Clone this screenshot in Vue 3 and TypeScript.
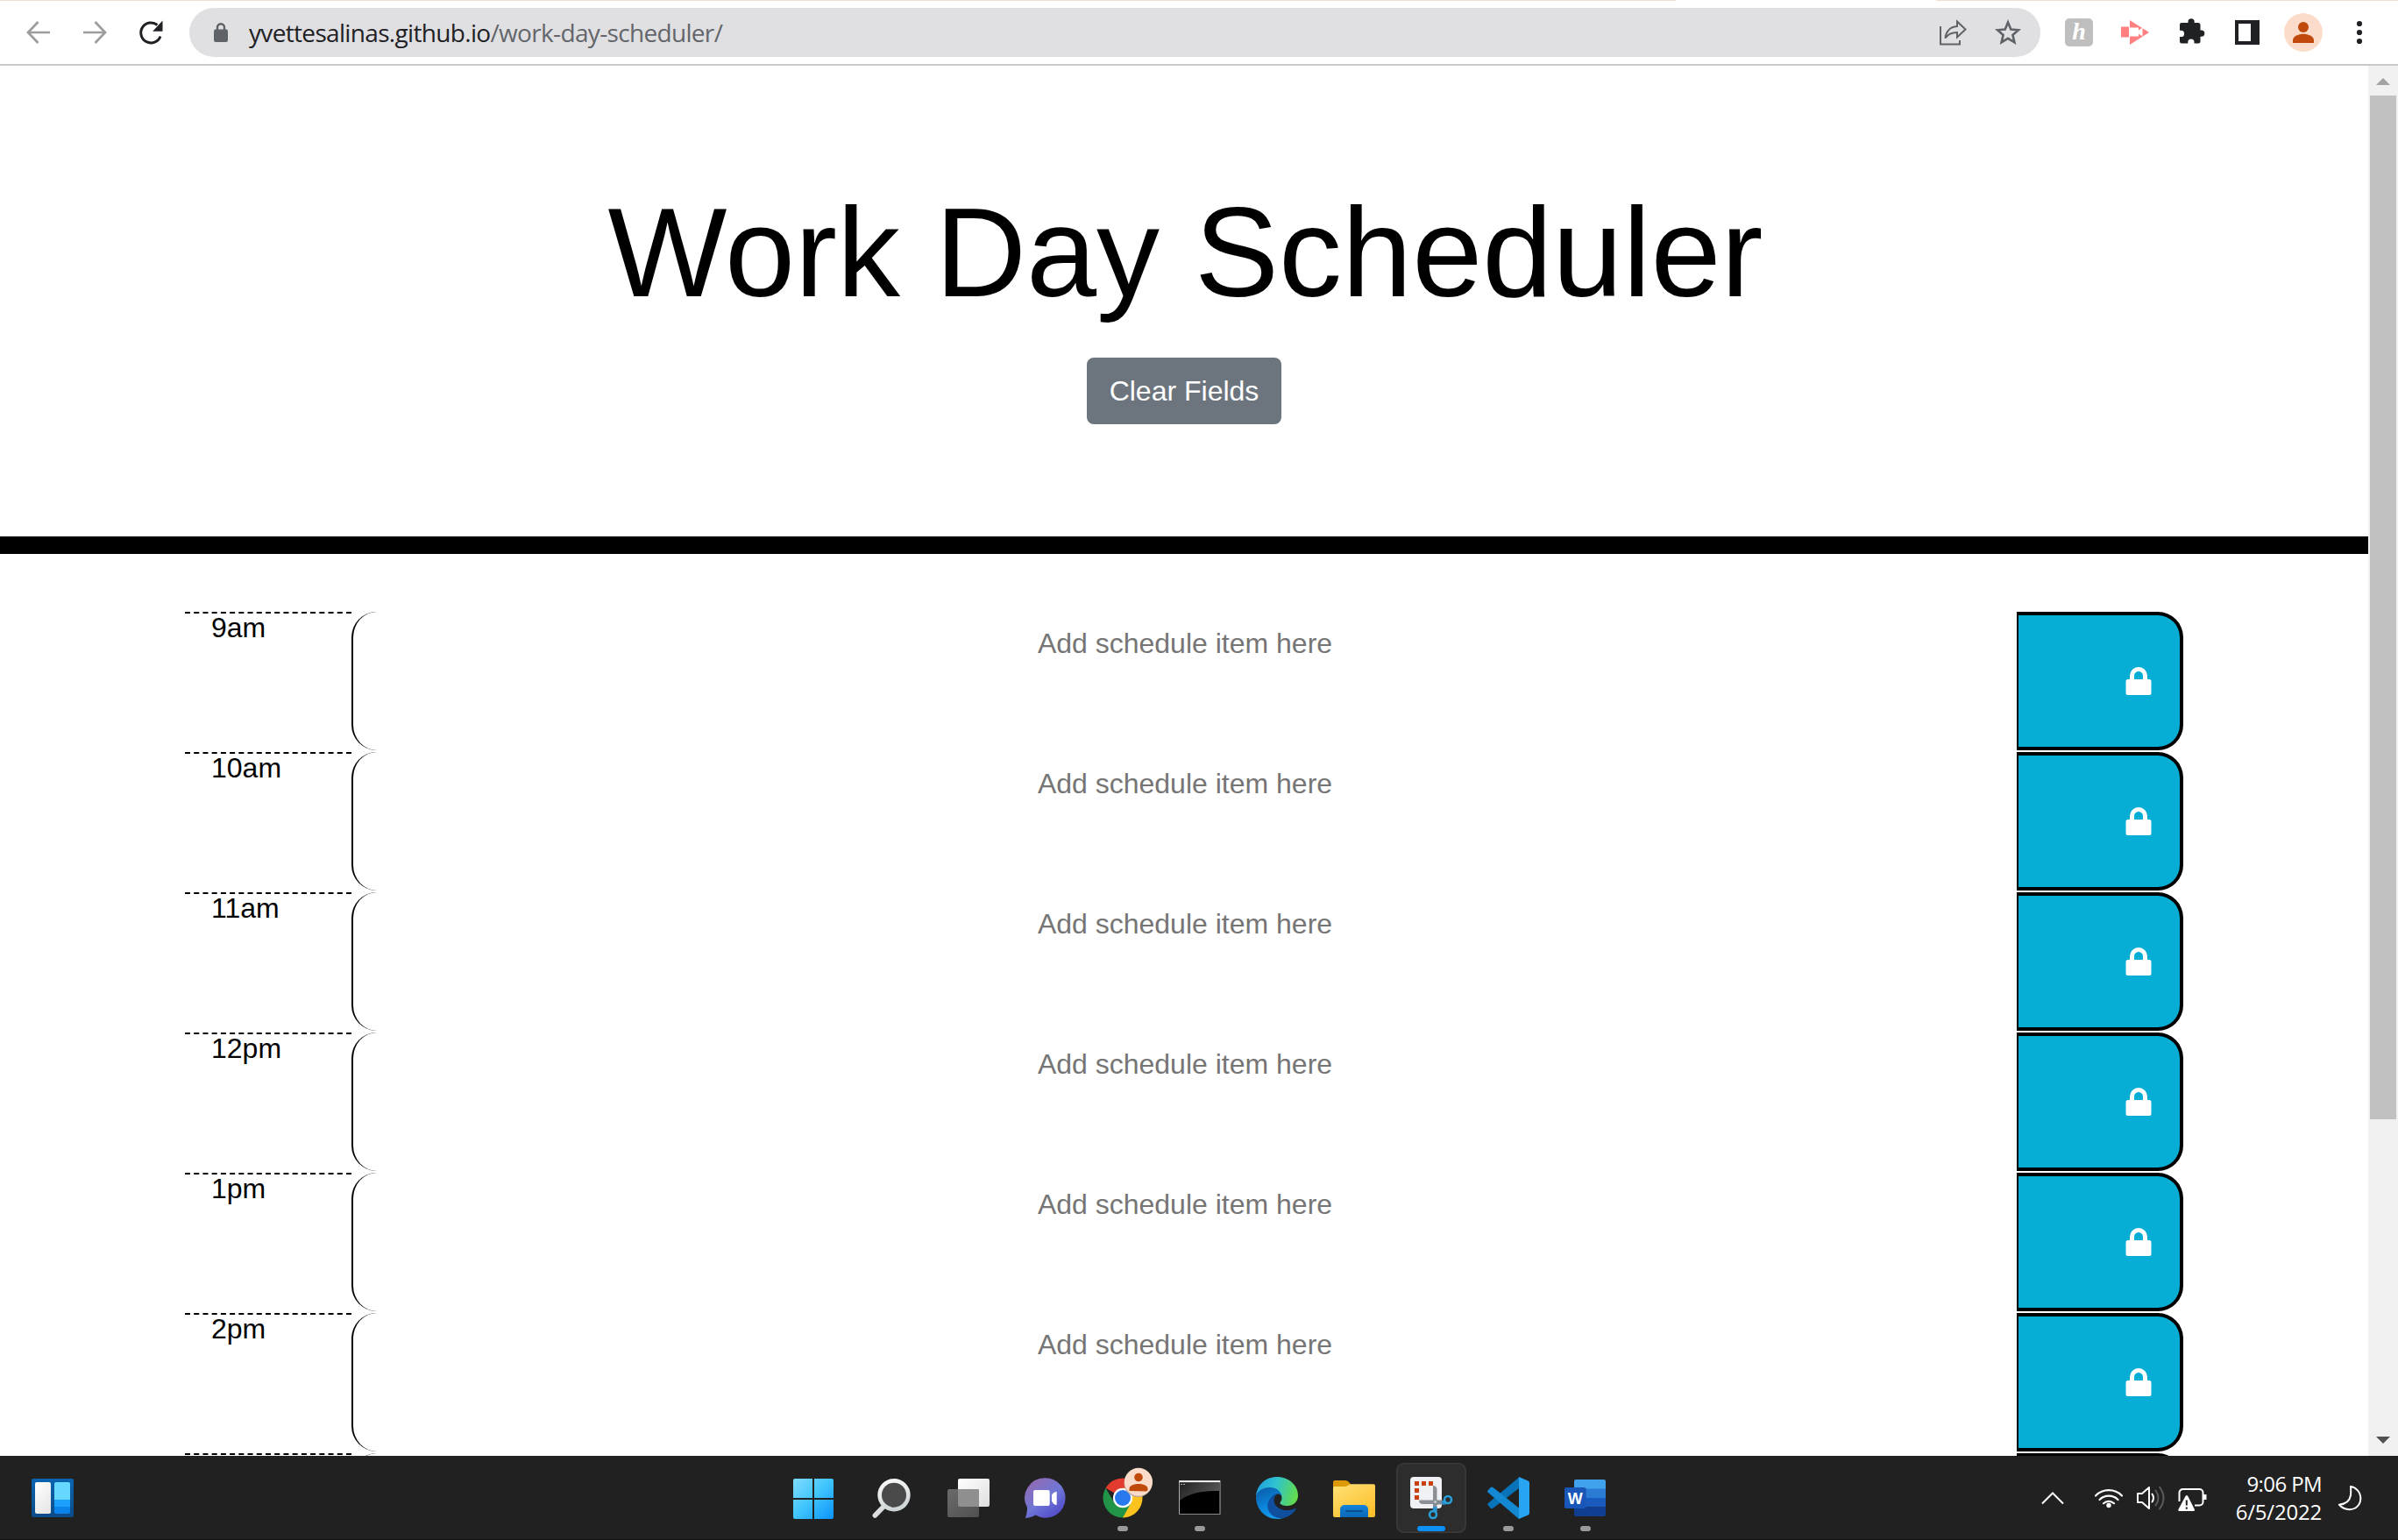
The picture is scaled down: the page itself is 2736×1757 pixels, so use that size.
<script setup lang="ts">
interface TimeBlock {
  label: string
}

const blocks: TimeBlock[] = [
  { label: '9am' },
  { label: '10am' },
  { label: '11am' },
  { label: '12pm' },
  { label: '1pm' },
  { label: '2pm' },
  { label: '' },
]
</script>

<template>
  <div class="screen">
    <header class="toolbar">
      <svg class="ic back" width="30" height="30" viewBox="0 0 30 30" fill="none" stroke="#9d9d9f" stroke-width="2.7"><path d="M28 15H4M14.5 3L3 15l11.500 12" /></svg>
      <svg class="ic forward" width="30" height="30" viewBox="0 0 30 30" fill="none" stroke="#9d9d9f" stroke-width="2.7"><path d="M2 15h24M15.500 3L27 15 15.500 27" /></svg>
      <svg class="ic reload" width="30" height="30" viewBox="0 0 30 30"><path d="M26 19.500A11.500 11.500 0 1 1 22.500 6.500" fill="none" stroke="#202124" stroke-width="3" /><path d="M28.500 1.500v12.200H17.200z" fill="#202124" /></svg>
      <div class="address">
        <svg width="18" height="24" viewBox="0 0 18 24"><path d="M5 9V6.200a4 4 0 0 1 8 0V9" fill="none" stroke="#5f6368" stroke-width="2.400" /><rect x="1" y="8.500" width="16" height="14.500" rx="2" fill="#5f6368" /></svg>
        <span class="url"><span class="host">yvettesalinas.github.io</span>/work-day-scheduler/</span>
        <svg class="share" width="32" height="30" viewBox="0 0 32 30" fill="none" stroke="#5f6368" stroke-width="2"><path d="M2 8v20.500h22V24" /><path d="M21 2.500L30.500 11.500 21 20.500v-5.500C14 15 10 17.500 7.500 21.500 8 14.500 12.500 8.500 21 8z" /></svg>
        <svg class="star" width="30" height="30" viewBox="0 0 30 30"><path d="M15 3.500l3.300 8 8.700.7-6.600 5.700 2 8.400L15 21.800l-7.400 4.500 2-8.400L3 12.200l8.700-.7z" fill="none" stroke="#5f6368" stroke-width="2.600" /></svg>
      </div>
      <div class="honey">h</div>
      <svg class="ic clip" width="32" height="28" viewBox="0 0 32 28"><path d="M0 7.500h9v12H0zM10 0l22 14L10 28z" fill="#ff8080" /><path d="M9.500 8.500h10.500v3l4.500-3v10l-4.500-3v3H9.500z" fill="#fff" /></svg>
      <svg class="ic puzzle" width="30" height="30" viewBox="0 0 30 30"><path d="M3 6h7.500V4.800a3.600 3.600 0 0 1 7.200 0V6H22a2.500 2.500 0 0 1 2.500 2.500v6h1.200a3.600 3.600 0 0 1 0 7.200h-1.200V27a2.500 2.500 0 0 1-2.500 2.500h-4.500V28a3.600 3.600 0 0 0-7.200 0v1.500H3.500A2.500 2.500 0 0 1 1 27v-5h1.500a3.600 3.600 0 0 0 0-7.200H1V8a2 2 0 0 1 2-2z" fill="#202124" /></svg>
      <svg class="ic panel" width="28" height="28" viewBox="0 0 28 28"><path d="M0 0h28v28H0z" fill="#202124" /><path d="M4 4h14v20H4z" fill="#fff" /></svg>
      <svg class="ic avatar" width="44" height="44" viewBox="0 0 44 44"><circle cx="22" cy="22" r="22" fill="#fbdccb" /><circle cx="22" cy="16" r="6" fill="#c04a0b" /><path d="M10 34v-3c0-5 7-7.200 12-7.200S34 26 34 31v3z" fill="#c04a0b" /></svg>
      <svg class="ic dots" width="8" height="28" viewBox="0 0 8 28" fill="#202124"><circle cx="4" cy="4" r="3.100" /><circle cx="4" cy="14" r="3.100" /><circle cx="4" cy="24" r="3.100" /></svg>
    </header>

    <div class="viewport">
      <main class="page">
        <section class="jumbotron">
          <h1>Work Day Scheduler</h1>
          <button class="clear">Clear Fields</button>
        </section>
        <section class="schedule">
          <div v-for="(block, i) in blocks" :key="i" class="row">
            <div class="hour">{{ block.label }}</div>
            <textarea class="entry" placeholder="Add schedule item here"></textarea>
            <button class="save">
              <svg width="30" height="32" viewBox="0 0 30 32"><path d="M7.500 15.500V10a7.500 7.500 0 0 1 15 0v5.500" fill="none" stroke="#fff" stroke-width="5" /><rect x=".5" y="14" width="29" height="18" rx="2.500" fill="#fff" /></svg>
            </button>
          </div>
        </section>
      </main>
      <div class="scrollbar">
        <svg width="16" height="8" viewBox="0 0 16 8"><path d="M8 0l8 8H0z" fill="#a3a3a3" /></svg>
        <div class="thumb"></div>
        <svg class="down" width="16" height="8" viewBox="0 0 16 8"><path d="M0 0h16L8 8z" fill="#505050" /></svg>
      </div>
    </div>

    <footer class="taskbar">
      <div class="widgets">
        <svg width="48" height="44" viewBox="0 0 48 44">
          <defs><linearGradient id="wd" x2="0" y2="1"><stop stop-color="#0a64b0" /><stop offset="1" stop-color="#0c4c88" /></linearGradient><linearGradient id="ww" x2=".6" y2="1"><stop stop-color="#fff" /><stop offset="1" stop-color="#e8e8e8" /></linearGradient></defs>
          <rect width="48" height="44" rx="2" fill="url(#wd)" /><rect x="4" y="4" width="18" height="36" rx="2" fill="url(#ww)" /><rect x="26" y="4" width="18" height="36" rx="2" fill="#0a84ea" /><path d="M26 24h18v8H26z" fill="#1ba1fb" /><path d="M28 4h14a2 2 0 0 1 2 2v18H26V6a2 2 0 0 1 2-2z" fill="#66d8ff" />
        </svg>
      </div>

      <nav class="apps">
        <svg class="app" viewBox="0 0 80 80">
          <defs><linearGradient id="st" gradientUnits="userSpaceOnUse" x1="16" y1="18" x2="62" y2="64"><stop stop-color="#7fdcff" /><stop offset=".5" stop-color="#3fc4fd" /><stop offset="1" stop-color="#0a93fb" /></linearGradient></defs>
          <path d="M18 18h20v22H16V20a2 2 0 0 1 2-2zM40 18h20a2 2 0 0 1 2 2v20H40zM16 42h22v22H18a2 2 0 0 1-2-2zM40 42h22v20a2 2 0 0 1-2 2H40z" fill="url(#st)" />
        </svg>
        <svg class="app" viewBox="0 0 80 80">
          <defs><linearGradient id="se" x2=".3" y2="1"><stop stop-color="#fff" /><stop offset="1" stop-color="#cfd4d6" /></linearGradient></defs>
          <path d="M32 49L21.300 60" stroke="#dadedf" stroke-width="5.500" stroke-linecap="round" /><circle cx="43" cy="36.700" r="18.700" fill="url(#se)" /><circle cx="43" cy="36.700" r="14" fill="#4a4a4a" />
        </svg>
        <svg class="app" viewBox="0 0 80 80">
          <defs><linearGradient id="tv" x2="1" y2="1"><stop stop-color="#fff" /><stop offset="1" stop-color="#dedede" /></linearGradient><linearGradient id="tg" x2="1" y2="1"><stop stop-color="#6b6b6b" /><stop offset="1" stop-color="#505050" /></linearGradient></defs>
          <rect x="28" y="18" width="36" height="32" rx="2" fill="url(#tv)" /><rect x="16" y="30" width="36" height="32" rx="2" fill="url(#tg)" /><path d="M28 30h22a2 2 0 0 1 2 2v18H30a2 2 0 0 1-2-2z" fill="#8f8f8f" />
        </svg>
        <svg class="app" viewBox="0 0 80 80">
          <defs><linearGradient id="ct" x1=".1" y1=".2" x2=".7" y2="1"><stop stop-color="#8d6cb8" /><stop offset=".5" stop-color="#6f77d6" /><stop offset="1" stop-color="#524cc8" /></linearGradient></defs>
          <path d="M39.500 17.300a22.700 22.700 0 1 1-11 42.300C25 62 20 63 17 63c1-4 2-7 2-12a22.700 22.700 0 0 1 20.500-33.700z" fill="url(#ct)" /><rect x="26" y="31" width="18.700" height="18" rx="2" fill="#fff" /><path d="M47 37c1-2.500 3-4 5.700-4.200v15.200C50 48 48 46 47 43.500z" fill="#fff" />
        </svg>
        <svg class="app" viewBox="0 0 80 80">
          <path d="M40 40L20.500 28.800A22.500 22.500 0 0 1 59.500 28.800z" fill="#e33b2e" /><path d="M40 28.800h19.500A22.500 22.500 0 0 1 40 62.500l-3-8z" fill="#fcc31e" /><path d="M20.500 28.800L30.300 45.600 49.700 45.600 40 62.500A22.500 22.500 0 0 1 20.500 28.800z" fill="#219447" /><circle cx="40" cy="40" r="11.200" fill="#fff" /><circle cx="40" cy="40" r="9" fill="#2878ee" />
          <circle cx="57.500" cy="23" r="16" fill="#b7a79f" /><circle cx="58" cy="21.700" r="16" fill="#fbdccb" /><circle cx="58" cy="16.500" r="4.800" fill="#c04a0b" /><path d="M47.500 32v-2.500c0-4 6-5.500 10.500-5.500s10.500 1.500 10.500 5.500v1a2 2 0 0 1-2 2z" fill="#c04a0b" />
          <rect class="dot" x="34" y="72" width="12" height="6" rx="3" />
        </svg>
        <svg class="app" viewBox="0 0 80 80">
          <defs><linearGradient id="cm" x2="1" y2=".4"><stop stop-color="#222" /><stop offset="1" stop-color="#555" /></linearGradient></defs>
          <path d="M16 20h47.500v38.700H16z" fill="#a8adb3" /><path d="M16.500 20.300h46.500v2H16.500z" fill="#f2f2f2" /><path d="M17 22.500h45.500V58H17z" fill="#000" /><path d="M17 22.500h45.500V32C38 31 24 37 17 43z" fill="url(#cm)" /><path d="M18 24.500h6" stroke="#aaa" stroke-width="1" stroke-dasharray="2 1" />
          <rect class="dot" x="34" y="72" width="12" height="6" rx="3" />
        </svg>
        <svg class="app" viewBox="0 0 80 80">
          <defs><linearGradient id="eg" x1="0" y1=".3" x2="1" y2=".5"><stop stop-color="#1f9fe0" /><stop offset=".45" stop-color="#2fc3cf" /><stop offset="1" stop-color="#63dc4a" /></linearGradient><linearGradient id="eb" x2=".4" y2="1"><stop stop-color="#0c59a4" /><stop offset=".6" stop-color="#0a83d8" /><stop offset="1" stop-color="#1499e8" /></linearGradient></defs>
          <path d="M16 38C17 25 27 16 40 16c14 0 24 10 24 21 0 8-6 12-12 12-5 0-8.500-1.500-8.500-3 0-1.500 2-2.500 2-6 0-6-6-11-14-11-7 0-13 3-15.500 9z" fill="url(#eg)" />
          <path d="M16 39c1-7 8-11 15.500-11C39 28 44.500 32 45.500 38c-1-2-3-2.500-5-2.500-5 0-10 6-7.500 14C35.500 57 42 62.500 49 62c-3 1.500-6 2-9 2-13 0-24-11-24-25z" fill="url(#eb)" />
          <path d="M32 41c-7 9 0 23 14 22 7-.7 12.500-5 15.500-10 .6-1-.3-1.500-1.200-1C56 54.500 50 55 45 53c-5-1.800-9-6-8.500-11 .2-3 1.500-5 4-6.500-3.500-.2-6.500 2.500-8.500 5.500z" fill="#104f9e" />
        </svg>
        <svg class="app" viewBox="0 0 80 80">
          <defs><linearGradient id="fo" x2=".7" y2="1"><stop stop-color="#ffe176" /><stop offset="1" stop-color="#fdc02d" /></linearGradient><linearGradient id="fb" x2="0" y2="1"><stop stop-color="#1284d8" /><stop offset="1" stop-color="#0b68b8" /></linearGradient></defs>
          <path d="M18 20h12c2 0 3.500 1 6 4.500V32H16V22a2 2 0 0 1 2-2z" fill="#dc9a06" /><path d="M16 29c0-1.700 1-2 2-2h12c2 0 4-2.800 6-2.800h26a2 2 0 0 1 2 2V60a2 2 0 0 1-2 2H18a2 2 0 0 1-2-2z" fill="url(#fo)" /><path d="M24 62V53a5 5 0 0 1 5-5h22a5 5 0 0 1 5 5v9z" fill="url(#fb)" /><path d="M31 55h18" stroke="#0a4d8c" stroke-width="2" stroke-linecap="round" />
        </svg>
        <svg class="app" viewBox="0 0 80 80">
          <rect x=".8" y=".8" width="78.400" height="78.400" rx="8" fill="#2d2d2d" stroke="#3a3a3a" stroke-width="1.600" />
          <rect x="16" y="16" width="36" height="36" rx="4" fill="#f0f1f5" />
          <path d="M21 21h5v5h-5zM29 21h5v5h-5zM37 21h5v5h-5zM21 29h5v5h-5zM21 37h5v5h-5z" fill="#c9400f" />
          <path d="M42 26c3 0 4.500 1.500 4.500 4.500V48h-4.500zM26 42.500h27v4.500H30.500c-3 0-4.500-1.500-4.500-4.500z" fill="#8b9097" /><path d="M46 43h9v4.500h-9zM42 46h4.500v10H42z" fill="#858b92" />
          <path d="M42 50h4.500v6H42zM52 43h5v4.500h-5z" fill="#2a93cf" /><circle cx="59" cy="42" r="4" fill="none" stroke="#2a9fd8" stroke-width="2.600" /><circle cx="42" cy="59" r="4" fill="none" stroke="#2a9fd8" stroke-width="2.600" /><circle cx="44.500" cy="44.500" r="1.200" fill="#ddd" />
          <rect x="24" y="72" width="32" height="6" rx="3" fill="#0c90f5" />
        </svg>
        <svg class="app" viewBox="0 0 80 80">
          <path d="M16.500 48l3 3.500c1 1 2 1 3 .3L52 29V16.500L17 46c-.8.700-.8 1.300-.5 2z" fill="#0873b8" /><path d="M16.500 31.500l3-3.200c1-1 2-1 3-.3L52 51.500V64L17 34c-1-.8-1-1.700-.5-2.500z" fill="#1389d3" /><path d="M52 16l10.500 4.500c1 .5 1.500 1.200 1.500 2.500v34c0 1.200-.5 2-1.500 2.500L52 64z" fill="#27a4f2" />
          <rect class="dot" x="34" y="72" width="12" height="6" rx="3" />
        </svg>
        <svg class="app" viewBox="0 0 80 80">
          <path d="M29 19h32a2 2 0 0 1 2 2v9H27v-9a2 2 0 0 1 2-2z" fill="#41a2ec" /><path d="M27 29.500h36V40H27z" fill="#2b7bd4" /><path d="M27 40h36v10.500H27z" fill="#185abd" /><path d="M27 50.500h36V59a2 2 0 0 1-2 2H29a2 2 0 0 1-2-2z" fill="#103f91" /><rect x="16" y="28" width="24.700" height="24" rx="2" fill="#1a56b8" /><text x="28.300" y="46.500" text-anchor="middle" class="word">W</text>
          <rect class="dot" x="34" y="72" width="12" height="6" rx="3" />
        </svg>
      </nav>

      <div class="tray">
        <svg class="chev" width="28" height="16" viewBox="0 0 28 16" fill="none" stroke="#fff" stroke-width="2"><path d="M2 14.500L14 2.500l12 12" /></svg>
        <svg class="wifi" width="34" height="26" viewBox="0 0 34 26" fill="none" stroke="#fff" stroke-width="2.200" stroke-linecap="round"><path d="M2 10.500a21 21 0 0 1 30 0M6.500 15a15 15 0 0 1 21 0M11 19.200a8.800 8.800 0 0 1 12 0" /><circle cx="17" cy="21.500" r="2.700" fill="#fff" stroke="none" /></svg>
        <svg class="vol" width="34" height="30" viewBox="0 0 34 30" fill="none" stroke="#fff" stroke-width="2" stroke-linecap="round" stroke-linejoin="round"><path d="M2 10h5l8-7v24l-8-7H2zM18.500 10.500q3 4.500 0 9" /><path d="M22.500 6.500q6 8.500 0 17M27 2.500q9 12.500 0 25" stroke="#5a5a5a" /></svg>
        <svg class="bat" width="34" height="28" viewBox="0 0 34 28"><path d="M1.500 16V6a4 4 0 0 1 4-4h19a4 4 0 0 1 4 4v10.500a4 4 0 0 1-4 4H19" fill="none" stroke="#fff" stroke-width="2" /><path d="M29 8h3.500v6H29z" fill="#fff" /><path d="M8.500 10c.8-1.300 2-1.300 2.800 0l7.500 15c.5 1.300 0 2-1 2H1.500c-1.200 0-1.500-.8-1-2z" fill="#fff" /><path d="M9.800 14.500v6M9.800 22.500v2.200" stroke="#212121" stroke-width="2" /></svg>
        <div class="clock"><span class="time">9:06 PM</span><span class="date">6/5/2022</span></div>
        <svg class="moon" width="28" height="30" viewBox="0 0 28 30"><path d="M15 2C21 3 26.300 8 26.300 15.500c0 7.500-5.500 12.700-12.500 12.700-5.500 0-9.500-2.500-12-5.500C9 22 14 18 15 12c.5-4 .2-7 0-10z" fill="none" stroke="#fff" stroke-width="2" stroke-linejoin="round" /></svg>
      </div>
    </footer>
  </div>
</template>

<style>
body {
  margin: 0;
  overflow: hidden;
}
</style>

<style scoped>
.screen {
  width: 2736px;
  height: 1757px;
  display: flex;
  flex-direction: column;
  background: #fff;
  font-family: "Liberation Sans", Arial, sans-serif;
  overflow: hidden;
}
svg {
  display: block;
  flex: none;
}
.toolbar {
  box-sizing: border-box;
  height: 75px;
  flex: none;
  display: flex;
  align-items: center;
  padding-left: 29px;
  border-bottom: 2px solid #cacaca;
  background: linear-gradient(to right, #f0ddd4 1912px, #fff 1912px, #fff 2209px, #f0ddd4 2209px) 0 0 / 100% 1px no-repeat #fff;
}
.forward {
  margin-left: 34px;
}
.reload {
  margin-left: 34px;
}
.address {
  box-sizing: border-box;
  width: 2112px;
  height: 56px;
  margin-left: 29px;
  padding-left: 27px;
  display: flex;
  align-items: center;
  border-radius: 28px;
  background: #e0e0e2;
}
.url {
  width: 1928px;
  margin-left: 23px;
  font: 28px/40px "Open Sans", "Noto Sans", sans-serif;
  letter-spacing: -0.67px;
  color: #63666a;
  white-space: nowrap;
}
.host {
  color: #202124;
}
.star {
  margin-left: 32px;
}
.honey {
  width: 32px;
  height: 32px;
  margin-left: 28px;
  border-radius: 5px;
  background: #bfbfbf;
  color: #fff;
  font: italic bold 28px/30px "Liberation Serif", serif;
  text-align: center;
}
.clip {
  margin-left: 32px;
}
.puzzle {
  margin: 0 0 4px 34px;
}
.panel {
  margin-left: 34px;
}
.avatar {
  margin-left: 28px;
}
.dots {
  margin-left: 38px;
}
.viewport {
  height: 1586px;
  flex: none;
  display: flex;
  overflow: hidden;
}
.page {
  width: 2702px;
  height: 1586px;
  overflow: hidden;
}
.jumbotron {
  box-sizing: border-box;
  height: 557px;
  padding-top: 128px;
  border-bottom: 20px solid #000;
  display: flex;
  flex-direction: column;
  align-items: center;
}
h1 {
  margin: 0;
  padding-left: 3px;
  font-size: 144px;
  line-height: 172px;
  font-weight: 400;
  color: #000;
  white-space: nowrap;
}
.clear {
  width: 222px;
  height: 76px;
  margin: 33px 0 0;
  padding: 0;
  border: 0;
  border-radius: 8px;
  background: #6c757d;
  color: #fff;
  font: 32px/48px "Liberation Sans", Arial, sans-serif;
}
.schedule {
  padding: 66px 211px 0;
}
.row {
  display: grid;
  grid-template-columns: 190px 1900px 190px;
  height: 160px;
}
.hour {
  border-top: 2px dashed #000;
  padding-left: 30px;
  font-size: 32px;
  line-height: 33px;
  color: #000;
}
.entry {
  box-sizing: border-box;
  width: 1900px;
  height: 158px;
  margin: 0;
  padding: 12px 4px 0;
  border: 0 solid #000;
  border-left-width: 2px;
  border-radius: 29px;
  background: transparent;
  font: 32px/48px "Liberation Sans", Arial, sans-serif;
  text-align: center;
  resize: none;
  outline: none;
  overflow: hidden;
}
.entry::placeholder {
  color: #757575;
  opacity: 1;
}
.save {
  box-sizing: border-box;
  width: 190px;
  height: 158px;
  padding: 0 32px 0 0;
  display: flex;
  align-items: center;
  justify-content: flex-end;
  border: 4px solid #000;
  border-left-width: 2px;
  border-radius: 0 29px 29px 0;
  background: #06aed5;
}
.scrollbar {
  width: 34px;
  box-sizing: border-box;
  padding: 14px 0;
  display: flex;
  flex-direction: column;
  align-items: center;
  background: #f1f1f1;
}
.thumb {
  width: 30px;
  height: 1168px;
  margin-top: 12px;
  background: #c1c1c1;
}
.down {
  margin-top: auto;
}
.taskbar {
  box-sizing: border-box;
  height: 96px;
  flex: none;
  display: grid;
  grid-template-columns: 889px 960px 1fr;
  align-items: center;
  border-bottom: 1px solid #111;
  background: #212121;
}
.widgets {
  padding-left: 36px;
}
.apps {
  display: flex;
  gap: 8px;
}
.app {
  width: 80px;
  height: 80px;
}
.dot {
  fill: #9c9a99;
}
.word {
  font: bold 18px "Liberation Sans", Arial, sans-serif;
  fill: #fff;
}
.tray {
  display: flex;
  align-items: center;
  padding-left: 479px;
}
.wifi {
  margin-left: 33px;
}
.vol {
  margin-left: 14px;
}
.bat {
  margin: 5px 0 0 14px;
}
.clock {
  width: 130px;
  display: flex;
  flex-direction: column;
  align-items: flex-end;
  font: 24px/32px "Open Sans", "Noto Sans", sans-serif;
  color: #fff;
  white-space: nowrap;
}
.time {
  letter-spacing: -0.6px;
}
.date {
  letter-spacing: -0.2px;
}
.moon {
  margin-left: 18px;
}
</style>
